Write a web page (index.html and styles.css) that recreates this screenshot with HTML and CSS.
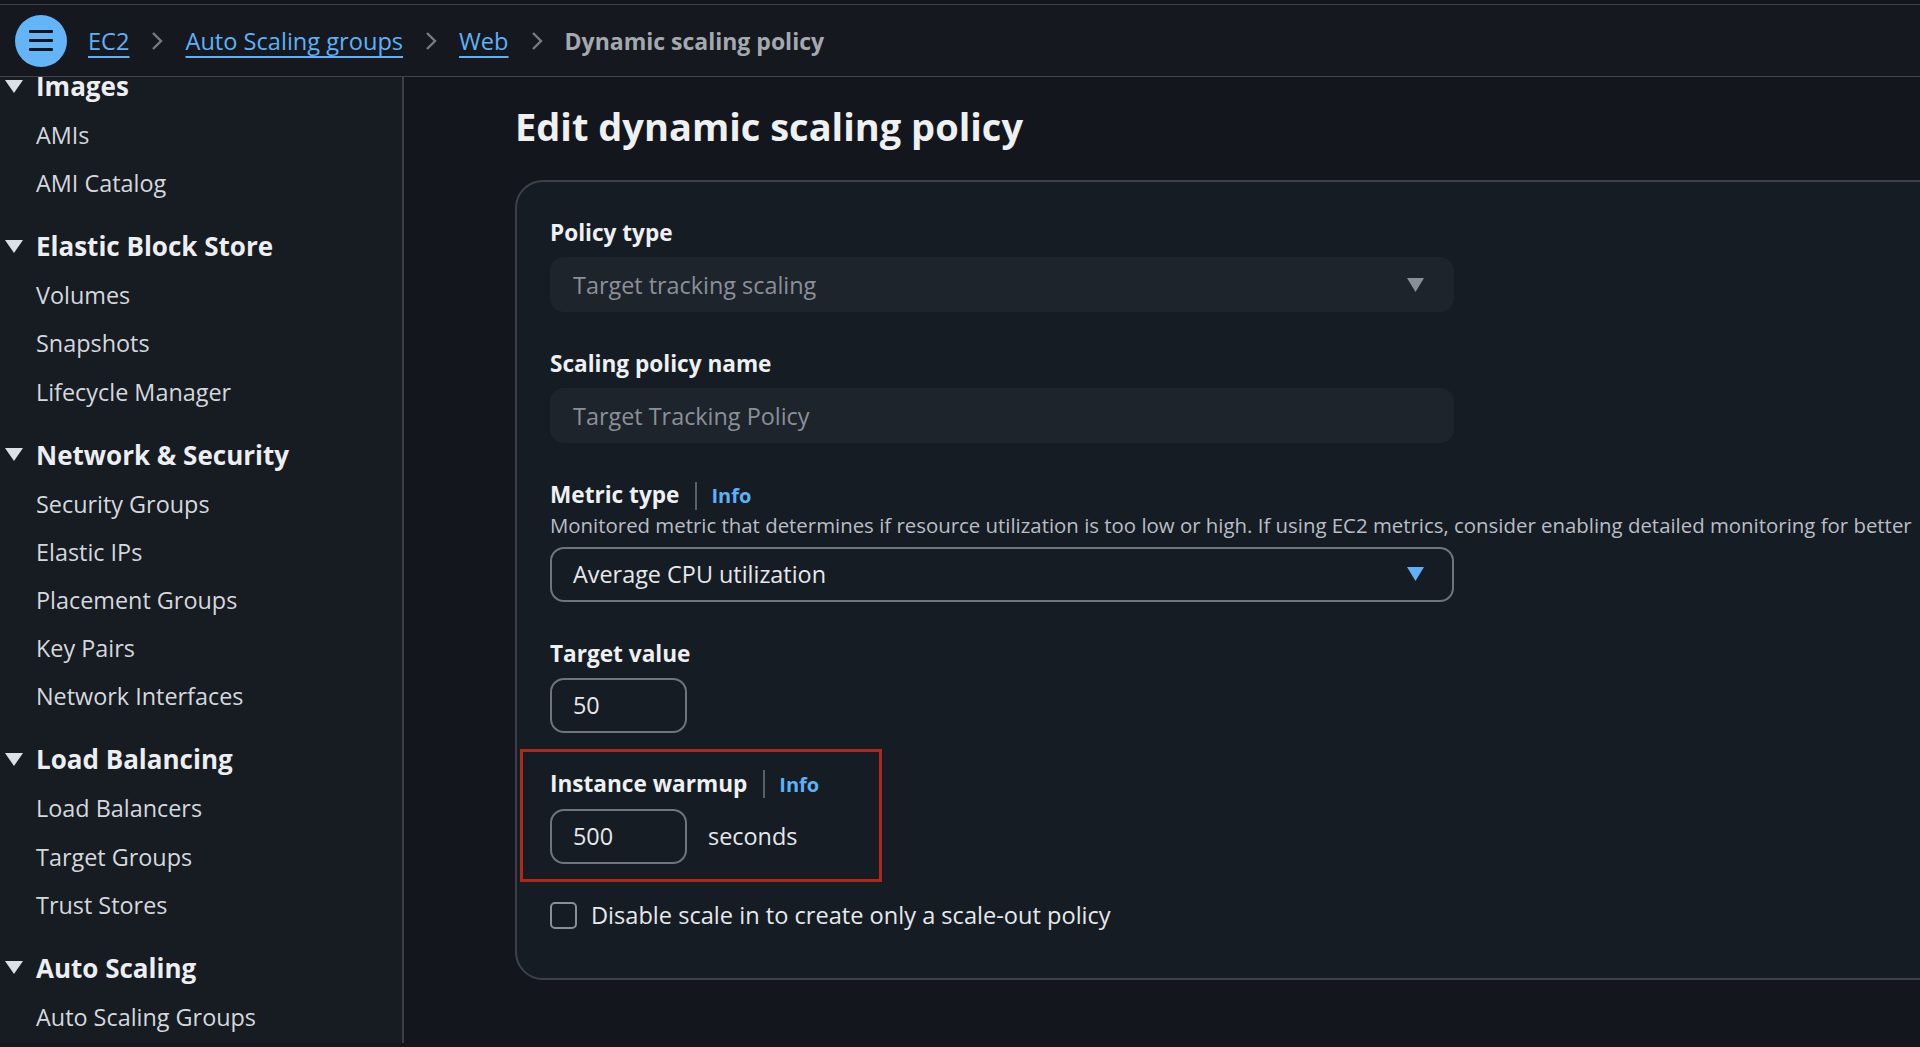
FILE: index.html
```html
<!DOCTYPE html>
<html lang="en">
<head>
    <meta charset="UTF-8">
    <meta name="viewport" content="width=device-width, initial-scale=1.0">
    <title>Edit dynamic scaling policy</title>
<link rel="stylesheet" href="styles.css">
</head>
<body>
    <header class="topbar">
        <button class="menu-btn" aria-label="Open navigation">
            <svg width="24" height="21" viewBox="0 0 24 21"><rect x="0" y="0" width="24" height="3" rx="1"/><rect x="0" y="9" width="24" height="3" rx="1"/><rect x="0" y="18" width="24" height="3" rx="1"/></svg>
        </button>
        <nav class="crumbs">
            <a href="#">EC2</a>
            <span class="chev"><svg width="12" height="20" viewBox="0 0 12 20"><polyline points="2,2 10,10 2,18"/></svg></span>
            <a href="#">Auto Scaling groups</a>
            <span class="chev"><svg width="12" height="20" viewBox="0 0 12 20"><polyline points="2,2 10,10 2,18"/></svg></span>
            <a href="#">Web</a>
            <span class="chev"><svg width="12" height="20" viewBox="0 0 12 20"><polyline points="2,2 10,10 2,18"/></svg></span>
            <span class="current">Dynamic scaling policy</span>
        </nav>
    </header>

    <div class="layout">
        <aside class="sidebar">
            <div class="nav">
                <div class="nav-group">
                    <div class="nav-head"><svg width="18" height="13" viewBox="0 0 18 13"><polygon points="0,0 18,0 9,13"/></svg>Images</div>
                    <a class="nav-link" href="#">AMIs</a>
                    <a class="nav-link" href="#">AMI Catalog</a>
                </div>
                <div class="nav-group">
                    <div class="nav-head"><svg width="18" height="13" viewBox="0 0 18 13"><polygon points="0,0 18,0 9,13"/></svg>Elastic Block Store</div>
                    <a class="nav-link" href="#">Volumes</a>
                    <a class="nav-link" href="#">Snapshots</a>
                    <a class="nav-link" href="#">Lifecycle Manager</a>
                </div>
                <div class="nav-group">
                    <div class="nav-head"><svg width="18" height="13" viewBox="0 0 18 13"><polygon points="0,0 18,0 9,13"/></svg>Network &amp; Security</div>
                    <a class="nav-link" href="#">Security Groups</a>
                    <a class="nav-link" href="#">Elastic IPs</a>
                    <a class="nav-link" href="#">Placement Groups</a>
                    <a class="nav-link" href="#">Key Pairs</a>
                    <a class="nav-link" href="#">Network Interfaces</a>
                </div>
                <div class="nav-group">
                    <div class="nav-head"><svg width="18" height="13" viewBox="0 0 18 13"><polygon points="0,0 18,0 9,13"/></svg>Load Balancing</div>
                    <a class="nav-link" href="#">Load Balancers</a>
                    <a class="nav-link" href="#">Target Groups</a>
                    <a class="nav-link" href="#">Trust Stores</a>
                </div>
                <div class="nav-group">
                    <div class="nav-head"><svg width="18" height="13" viewBox="0 0 18 13"><polygon points="0,0 18,0 9,13"/></svg>Auto Scaling</div>
                    <a class="nav-link" href="#">Auto Scaling Groups</a>
                </div>
            </div>
        </aside>

        <main class="content">
            <h1 class="page-title">Edit dynamic scaling policy</h1>

            <div class="panel">
                <div class="field">
                    <div class="field-label">Policy type</div>
                    <div class="select disabled">
                        <span>Target tracking scaling</span>
                        <svg width="17" height="14" viewBox="0 0 17 14"><polygon points="0,0 17,0 8.5,14"/></svg>
                    </div>
                </div>

                <div class="field">
                    <div class="field-label">Scaling policy name</div>
                    <div class="input wide disabled">Target Tracking Policy</div>
                </div>

                <div class="field">
                    <div class="field-label">Metric type <span class="divider"></span><a class="info" href="#">Info</a></div>
                    <div class="description">Monitored metric that determines if resource utilization is too low or high. If using EC2 metrics, consider enabling detailed monitoring for better</div>
                    <div class="select">
                        <span>Average CPU utilization</span>
                        <svg width="17" height="14" viewBox="0 0 17 14"><polygon points="0,0 17,0 8.5,14"/></svg>
                    </div>
                </div>

                <div class="field">
                    <div class="field-label">Target value</div>
                    <div class="input small">50</div>
                </div>

                <div class="highlight">
                    <div class="field-label">Instance warmup <span class="divider"></span><a class="info" href="#">Info</a></div>
                    <div class="input-row">
                        <div class="input small">500</div>
                        <span class="unit">seconds</span>
                    </div>
                </div>

                <label class="check-row">
                    <span class="checkbox"></span>
                    Disable scale in to create only a scale-out policy
                </label>
            </div>
        </main>
    </div>
</body>
</html>
```

FILE: styles.css
```css
html, body{
    margin: 0;
    height: 100%;
    overflow: hidden;
}
body{
    background-color: #13171d;
    font-family: "Open Sans", "Noto Sans", sans-serif;
    color: #e6e8eb;
}

/* top bar */
.topbar{
    margin-top: 4px;
    height: 71px;
    border-top: 1px solid #3b4048;
    border-bottom: 1px solid #40454d;
    background-color: #15191f;
    display: flex;
    align-items: center;
    padding-left: 15px;
}
.menu-btn{
    width: 52px;
    height: 52px;
    border: none;
    border-radius: 50%;
    background-color: #64b4f8;
    display: flex;
    align-items: center;
    justify-content: center;
    padding: 0;
}
.menu-btn svg{
    fill: #0f141a;
}
.crumbs{
    margin-left: 21px;
    display: flex;
    align-items: center;
    font-size: 23.6px;
    line-height: 32px;
}
.crumbs a{
    color: #5fb1f6;
    text-decoration: underline;
    text-decoration-thickness: 2px;
    text-underline-offset: 6px;
}
.chev{
    margin: 0 22px;
    display: flex;
}
.chev polyline{
    fill: none;
    stroke: #767b83;
    stroke-width: 2.4;
}
.current{
    color: #a4a9b0;
    font-weight: 700;
    font-size: 23px;
}

/* layout */
.layout{
    display: flex;
    height: calc(100% - 81px);
}
.sidebar{
    width: 402px;
    flex-shrink: 0;
    background-color: #171b22;
    border-right: 2px solid #3b4047;
    overflow: hidden;
}
.nav{
    margin-top: -16px;
}
.nav-group + .nav-group{
    margin-top: 14px;
}
.nav-head{
    display: flex;
    align-items: center;
    height: 50px;
    font-size: 26px;
    font-weight: 700;
    color: #eceef1;
}
.nav-head svg{
    margin-left: 5px;
    margin-right: 13px;
    fill: #dde0e4;
}
.nav-link{
    display: block;
    height: 48.15px;
    line-height: 48.15px;
    padding-left: 36px;
    font-size: 23.4px;
    color: #d4d8dd;
    text-decoration: none;
}

/* main */
.content{
    flex: 1;
    min-width: 0;
    padding-left: 111px;
    overflow: hidden;
}
.page-title{
    margin: 24px 0 29px;
    font-size: 38px;
    line-height: 50px;
    font-weight: 700;
    color: #eef0f2;
}
.panel{
    width: 1500px;
    box-sizing: border-box;
    border: 2px solid #3d424a;
    border-radius: 28px;
    background-color: #161c24;
    padding: 35px 0 49px 33px;
}
.field + .field{
    margin-top: 36px;
}
.field-label{
    display: flex;
    align-items: baseline;
    font-size: 22.6px;
    line-height: 32px;
    font-weight: 700;
    color: #eef0f2;
    margin-bottom: 8px;
    white-space: nowrap;
}
.divider{
    align-self: center;
    width: 2px;
    height: 28px;
    background-color: #59606a;
    margin: 0 14px 0 16px;
}
.info{
    font-size: 20px;
    font-weight: 700;
    color: #5fb1f6;
    text-decoration: none;
}
.description{
    font-size: 20.4px;
    line-height: 26px;
    color: #b9bec5;
    white-space: nowrap;
    margin-top: -8px;
    margin-bottom: 8.5px;
}
.select,
.input{
    box-sizing: border-box;
    height: 55px;
    border: 2px solid #70757d;
    border-radius: 14px;
    display: flex;
    align-items: center;
    padding-left: 21px;
    font-size: 23.4px;
    color: #e6e8eb;
}
.select{
    width: 904px;
    justify-content: space-between;
    padding-right: 28px;
}
.select svg{
    fill: #5fb1f6;
}
.input.wide{
    width: 904px;
}
.input.small{
    width: 137px;
}
.disabled{
    border-color: transparent;
    background-color: #1e242c;
    color: #8b9098;
}
.select.disabled svg{
    fill: #8b8f96;
}

/* warmup (marked) */
.highlight{
    margin: 16px 0 0 -30px;
    width: 362px;
    box-sizing: border-box;
    border: 3px solid #ad2a1b;
    padding: 16px 0 15px 27px;
}
.input-row{
    display: flex;
    align-items: center;
}
.unit{
    margin-left: 21px;
    font-size: 23.4px;
    color: #e6e8eb;
}
.check-row{
    margin-top: 20px;
    display: flex;
    align-items: center;
    height: 27px;
    font-size: 23.6px;
    color: #e6e8eb;
}
.checkbox{
    width: 27px;
    height: 27px;
    box-sizing: border-box;
    border: 2px solid #8a8e95;
    border-radius: 5px;
    margin-right: 14px;
}
```
